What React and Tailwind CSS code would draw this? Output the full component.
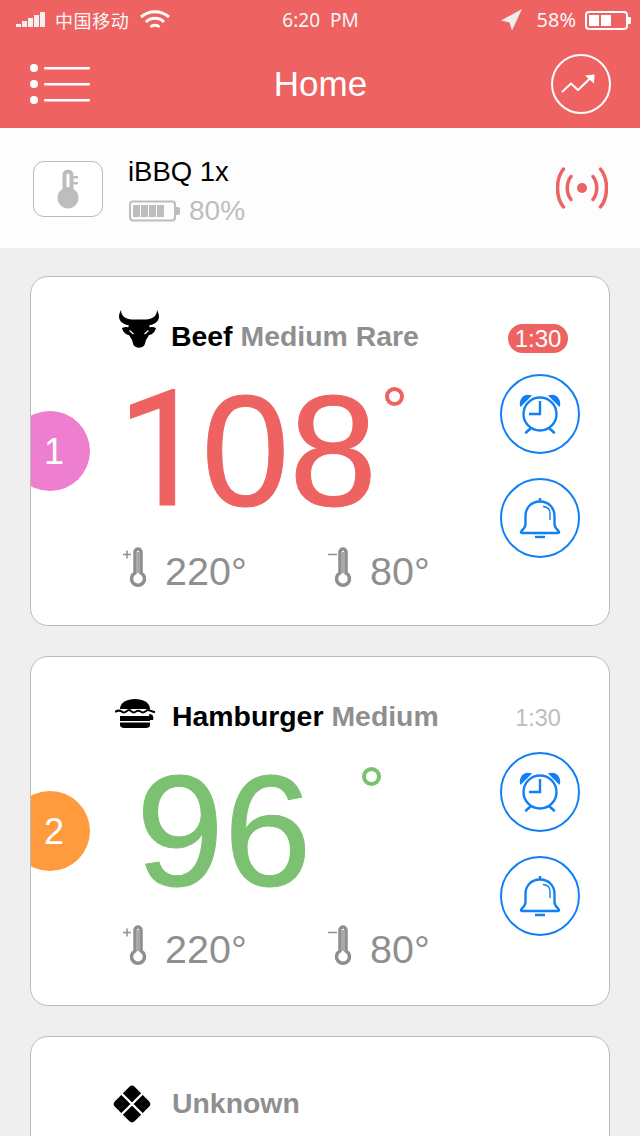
import React from 'react';

const StatusBar = () => (
  <div className="flex h-[40px] items-center font-['Noto_Sans','Noto_Sans_CJK_SC',sans-serif] text-[19px] text-[#f7f7f7]">
    <div className="flex flex-1 items-center pl-[16px]">
      <svg width="30" height="18" viewBox="0 0 30 18" fill="#f0f0f0">
        <rect x="0" y="13" width="5" height="3" />
        <rect x="6" y="10" width="5" height="6" />
        <rect x="12" y="7" width="5" height="9" />
        <rect x="18" y="4" width="5" height="12" />
        <rect x="24" y="1" width="5" height="15" />
      </svg>
      <span className="ml-[9px] font-['Noto_Sans_CJK_SC',sans-serif] text-[18px] tracking-[0.6px]">中国移动</span>
      <svg className="ml-[10px]" width="32" height="20" viewBox="0 0 32 20" fill="none" stroke="#fff" strokeWidth="3">
        <path d="M2 7 C10 0 22 0 30 7" />
        <path d="M7 12 C12 7 20 7 25 12" />
        <path d="M11.5 17 C14 14.5 18 14.5 20.5 17" />
      </svg>
    </div>
    <span className="mr-[6px] whitespace-pre">6:20  PM</span>
    <div className="flex flex-1 items-center justify-end pr-[9px]">
      <svg width="22" height="22" viewBox="0 0 22 22" fill="#eeeeee">
        <path d="M0 11.5 L21 0 L11 21.5 L8.5 13.5z" />
      </svg>
      <span className="ml-[14px] text-[20px]">58%</span>
      <svg className="ml-[9px]" width="46" height="19" viewBox="0 0 46 19" fill="#fff">
        <rect x="1" y="1" width="41" height="17" rx="3" fill="none" stroke="#fff" strokeWidth="2" />
        <rect x="4" y="4" width="10" height="11" />
        <rect x="16" y="4" width="10" height="11" />
        <path d="M43 6 h2 a1 1 0 0 1 1 1 v5 a1 1 0 0 1 -1 1 h-2z" />
      </svg>
    </div>
  </div>
);

const NavBar = () => (
  <div className="flex h-[88px] items-center justify-between pl-[30px] pr-[29px]">
    <svg width="60" height="40" viewBox="0 0 60 40" fill="#fff">
      <circle cx="4" cy="4" r="4" />
      <circle cx="4" cy="20" r="4" />
      <circle cx="4" cy="36" r="4" />
      <rect x="14" y="3" width="46" height="2.5" rx="1" />
      <rect x="14" y="19" width="46" height="2.5" rx="1" />
      <rect x="14" y="35" width="46" height="2.5" rx="1" />
    </svg>
    <span className="text-[35px] text-white">Home</span>
    <svg width="60" height="60" viewBox="0 0 60 60" fill="none" stroke="#fff">
      <circle cx="30" cy="30" r="29" strokeWidth="2" />
      <path d="M11 38 L20 29.5 L27 36 L40 23.5" strokeWidth="2" />
      <path d="M34 21.5 L43.5 20.5 L43 29.5z" fill="#fff" stroke="none" />
    </svg>
  </div>
);

const DeviceBar = () => (
  <div className="flex h-[120px] items-center bg-[#fdfdfd] pl-[33px] pr-[32px]">
    <div className="mt-[2px] flex h-[56px] w-[70px] items-center justify-center rounded-[11px] border-[1.5px] border-[#bcbcbc] bg-white">
      <svg width="24" height="40" viewBox="0 0 24 40" fill="#bdbdbd">
        <path d="M6.5 6 a5.5 5.5 0 0 1 11 0 V20 a10.5 10.5 0 1 1 -11 0z" />
        <path d="M10.5 6 a1.5 1.5 0 0 1 3 0 V18 H10.5z" fill="#fff" />
        <rect x="17" y="7" width="5" height="2.4" />
        <rect x="17" y="13" width="5" height="2.4" />
      </svg>
    </div>
    <div className="ml-[25px] flex flex-col self-start pt-[28px]">
      <span className="text-[27.5px] leading-[32px] text-black">iBBQ 1x</span>
      <div className="mt-[7px] flex items-center pl-[1px]">
        <svg width="51" height="22" viewBox="0 0 51 22" fill="#bdbdbd">
          <rect x="1" y="1.5" width="45" height="19" rx="3" fill="none" stroke="#bdbdbd" strokeWidth="2" />
          <rect x="4" y="5" width="7" height="12" />
          <rect x="12" y="5" width="7" height="12" />
          <rect x="20" y="5" width="7" height="12" />
          <rect x="28" y="5" width="7" height="12" />
          <path d="M47 7 h2 a2 2 0 0 1 2 2 v4 a2 2 0 0 1 -2 2 h-2z" />
        </svg>
        <span className="ml-[9px] text-[28px] leading-[32px] text-[#bdbdbd]">80%</span>
      </div>
    </div>
    <svg className="ml-auto" width="52" height="42" viewBox="0 0 52 42" fill="none" stroke="#ee6262" strokeWidth="3.5" strokeLinecap="round">
      <circle cx="26" cy="21" r="5" fill="#ee6262" stroke="none" />
      <path d="M15 9.5 C10 16 10 26 15 32.5" />
      <path d="M37 9.5 C42 16 42 26 37 32.5" />
      <path d="M7.5 2 C-0.5 12 -0.5 30 7.5 40" />
      <path d="M44.5 2 C52.5 12 52.5 30 44.5 40" />
    </svg>
  </div>
);

const BullIcon = () => (
  <svg className="mb-[14px] ml-[87px] mr-[11px]" width="42" height="38" viewBox="0 0 42 38">
    <path d="M3 0 C-2 9 3 15 13 15.5 L29 15.5 C39 15 44 9 39 0 C39 6 34 9.5 28 9.5 L14 9.5 C8 9.5 3 6 3 0z" fill="#000" />
    <path d="M12 11 L30 11 L33 22 L28 30 L26.5 35 C24 38.5 18 38.5 15.5 35 L14 30 L9 22z" fill="#000" />
    <path d="M4 18 C8 16 12 17 14 20 L11 25 C8 25 5 22 4 18z" fill="#000" />
    <path d="M38 18 C34 16 30 17 28 20 L31 25 C34 25 37 22 38 18z" fill="#000" />
    <path d="M11.5 20.5 L15.5 24 M30.5 20.5 L26.5 24" stroke="#fff" strokeWidth="1.2" />
  </svg>
);

const BurgerIcon = () => (
  <svg className="mb-[5px] ml-[84px] mr-[17px]" width="40" height="34" viewBox="0 0 40 34" fill="#000">
    <path d="M5 12 C5 5.5 12 2 20 2 C28 2 35 5.5 35 12z" />
    <path d="M0 15 C3 13 5 13 7.5 15 C10 17 12 13 14 13 C16 13 17.5 17 20 15 C22.5 13 24 13 26.5 15 C29 17 31 13 33 13 C35 13 37 15 40 15" fill="none" stroke="#000" strokeWidth="2" />
    <rect x="5" y="19" width="30" height="5" />
    <path d="M5 25.5 H35 V28 C35 30 33 31 31 31 H9 C7 31 5 30 5 28z" />
    <path d="M34 17 C38 17 39 20 38 23 L35 23z" />
  </svg>
);

const DiamondIcon = () => (
  <svg className="mb-[-2px] ml-[81px] mr-[20px]" width="40" height="40" viewBox="0 0 40 40">
    <rect x="6" y="6" width="28" height="28" rx="4" transform="rotate(45 20 20)" fill="#000" />
    <path d="M8 8 L32 32 M32 8 L8 32" stroke="#fff" strokeWidth="2.4" />
  </svg>
);

const Thermo = ({ minus }) => (
  <svg width="26" height="42" viewBox="0 0 26 42" fill="none" stroke="#8f8f8f">
    {minus ? (
      <path d="M1 7.5 H10" strokeWidth="1.5" />
    ) : (
      <path d="M1 7.5 H9 M5 3.5 V11.5" strokeWidth="1.5" />
    )}
    <path d="M13 26 V5 a3 3 0 0 1 6 0 V26 a6.5 6.5 0 1 1 -6 0z" strokeWidth="3.5" />
    <path d="M16 5 V26" strokeWidth="2" stroke="#a8a8a8" />
  </svg>
);

const AlarmButton = () => (
  <svg width="80" height="80" viewBox="0 0 80 80" fill="none" stroke="#1280f5" strokeWidth="2">
    <circle cx="40" cy="40" r="39" />
    <circle cx="40" cy="40" r="16.5" strokeWidth="2.4" />
    <path d="M40 27 V40 H29" strokeWidth="2.4" />
    <path d="M20.5 33 C17.5 26 24 18 32 21.5z" fill="#1280f5" stroke="none" />
    <path d="M59.5 33 C62.5 26 56 18 48 21.5z" fill="#1280f5" stroke="none" />
    <path d="M26 58.5 L30.5 54.5 M54 58.5 L49.5 54.5" strokeWidth="2.6" strokeLinecap="round" />
  </svg>
);

const BellButton = () => (
  <svg width="80" height="80" viewBox="0 0 80 80" fill="none" stroke="#1280f5" strokeWidth="2">
    <circle cx="40" cy="40" r="39" />
    <path d="M40 23.5 C31 23.5 25.5 30 25.5 38 V46 C25.5 49 24 51 21.5 53 C20.5 54 21 55 22 55 H58 C59 55 59.5 54 58.5 53 C56 51 54.5 49 54.5 46 V38 C54.5 30 49 23.5 40 23.5z" strokeWidth="2.4" />
    <path d="M40 20 V23" strokeWidth="2.4" />
    <path d="M35 59 H45" strokeWidth="2.4" />
    <path d="M43 28.5 C47 29 50 31 50 35 V42" strokeWidth="1.4" />
  </svg>
);

const Card = ({ badge, badgeColor, icon, name, doneness, topPad, value, valueColor, ringColor, numberClass, ringClass, limitsClass, timer, alarmGap }) => (
  <div className="relative h-[350px] overflow-hidden rounded-[18px] border border-[#bbbbbb] bg-white">
    {badge && (
      <div className={`absolute left-[-21px] top-[134px] flex h-[80px] w-[80px] items-center justify-center pl-[8px] pt-[2px] text-[36px] text-white ${badgeColor}`}>
        {badge}
      </div>
    )}
    <div className="flex">
      <div className={`flex flex-1 flex-col ${topPad}`}>
        <div className="flex h-[52px] items-center text-[28.4px] font-bold">
          {icon}
          {name && <span className="mr-[8px] mt-[1px] text-black">{name}</span>}
          <span className="mt-[1px] text-[#8f8f8f]">{doneness}</span>
        </div>
        {value && (
          <>
            <div className="mt-[6px] flex h-[164px] items-start">
              <span className={`text-[158px] leading-[164px] [-webkit-text-stroke:1px] ${numberClass} ${valueColor}`}>{value}</span>
              <span className={`h-[19px] w-[19px] rounded-full border-[4.5px] ${ringClass} ${ringColor}`}></span>
            </div>
            <div className={`flex h-[42px] items-center pl-[91px] text-[39.5px] text-[#8f8f8f] ${limitsClass}`}>
              <div className="flex w-[205px] items-center">
                <Thermo />
                <span className="ml-[17px] mt-[8px]">220°</span>
              </div>
              <div className="flex items-center">
                <Thermo minus />
                <span className="ml-[17px] mt-[8px]">80°</span>
              </div>
            </div>
          </>
        )}
      </div>
      {timer && (
        <div className="mr-[29px] flex w-[80px] flex-col items-center pt-[47px]">
          {timer}
          <div className={alarmGap}>
            <AlarmButton />
          </div>
          <div className="mt-[24px]">
            <BellButton />
          </div>
        </div>
      )}
    </div>
  </div>
);

export default function App() {
  return (
    <div className="h-[1136px] w-[640px] overflow-hidden bg-[#efefef] font-['Liberation_Sans',Arial,sans-serif]">
      <div className="bg-[#ee6262]">
        <StatusBar />
        <NavBar />
      </div>
      <DeviceBar />
      <div className="flex flex-col gap-[30px] px-[30px] pt-[28px]">
        <Card
          badge="1"
          badgeColor="rounded-full bg-[#ee7fd0]"
          icon={<BullIcon />}
          name="Beef"
          doneness="Medium Rare"
          topPad="pt-[33px]"
          value={<><span className="inline-block w-[84.5px] font-['Roboto',sans-serif] text-[162px]">1</span>08</>}
          valueColor="text-[#ee6262]"
          ringColor="border-[#ee6262]"
          numberClass="ml-[86px]"
          ringClass="ml-[8px] mt-[19px]"
          limitsClass="mt-[15px]"
          timer={<span className="mr-[4px] flex h-[29px] w-[60px] items-center justify-center rounded-full bg-[#ee6262] text-[24px] text-white">1:30</span>}
          alarmGap="mt-[21px]"
        />
        <Card
          badge="2"
          badgeColor="rounded-full bg-[#ff9b3d]"
          icon={<BurgerIcon />}
          name="Hamburger"
          doneness="Medium"
          topPad="pt-[33px]"
          value="96"
          valueColor="text-[#7cc072]"
          ringColor="border-[#7cc072]"
          numberClass="ml-[105px]"
          ringClass="ml-[50px] mt-[19px]"
          limitsClass="mt-[13px]"
          timer={<span className="mr-[4px] flex h-[29px] w-[60px] items-center justify-center text-[23.5px] text-[#bdbdbd]">1:30</span>}
          alarmGap="mt-[19px]"
        />
        <Card icon={<DiamondIcon />} doneness="Unknown" topPad="pt-[40px]" />
      </div>
    </div>
  );
}
